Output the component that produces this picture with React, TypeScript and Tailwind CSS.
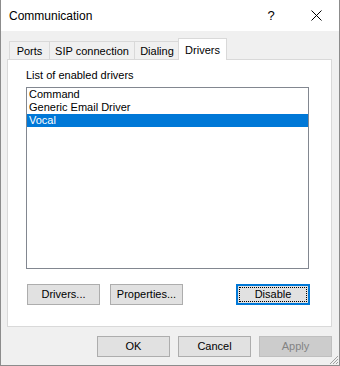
const tabs = [
  { label: "Ports", w: "w-[41px]" },
  { label: "SIP connection", w: "w-[85px]" },
  { label: "Dialing", w: "w-[45px]" },
  { label: "Drivers", w: "w-[49px]" },
];
const drivers = ["Command", "Generic Email Driver", "Vocal"];

const Btn = ({ label, w = "w-[73px]", disabled = false }: { label: string; w?: string; disabled?: boolean }) => (
  <div
    className={`${w} h-[21px] flex items-center justify-center border ${
      disabled ? "bg-[#cccccc] border-[#bfbfbf] text-[#838383]" : "bg-[#e1e1e1] border-[#adadad] text-black"
    }`}
  >
    {label}
  </div>
);

const App = () => {
  return (
    <div
      className="w-[340px] h-[366px] flex flex-col bg-[#f0f0f0] border-x border-b border-[#8c8c8c] text-[11px] text-black relative"
      style={{ fontFamily: '"Liberation Sans", Arial, sans-serif' }}
    >
      {/* title bar */}
      <div className="h-[31px] bg-white flex items-center pl-[8px] shrink-0">
        <span className="text-[12px]">Communication</span>
        <span className="ml-auto text-[13px] w-[10px] mr-[35px] text-center">?</span>
        <svg width="11" height="11" viewBox="0 0 11 11" className="mr-[17px]">
          <path d="M0.5 0.5 L10.5 10.5 M10.5 0.5 L0.5 10.5" stroke="#000" strokeWidth="1" />
        </svg>
      </div>

      {/* tab strip */}
      <div className="flex items-end h-[21px] mt-[7px] ml-[8px] relative z-10">
        {tabs.map((t, i) =>
          t.label === "Drivers" ? (
            <div
              key={t.label}
              className={`${t.w} h-[22px] -mb-px -ml-[2px] bg-white border border-b-0 border-[#d9d9d9] flex justify-center pt-[3px]`}
            >
              {t.label}
            </div>
          ) : (
            <div
              key={t.label}
              className={`${t.w} h-[18px] border-t border-r border-[#d9d9d9] ${i === 0 ? "border-l" : ""} flex items-center justify-center pt-px`}
            >
              {t.label}
            </div>
          )
        )}
      </div>

      {/* panel */}
      <div className="ml-[6px] w-[325px] h-[268px] bg-white border border-[#d9d9d9] pl-[18px] pt-[9px] flex flex-col">
        <div className="h-[13px] leading-[13px]">List of enabled drivers</div>
        <div className="mt-[5px] w-[283px] h-[182px] border border-[#828790] flex flex-col">
          {drivers.map((d) => (
            <div
              key={d}
              className={`h-[13px] leading-[13px] pl-[2px] ${d === "Vocal" ? "bg-[#0078d7] text-white" : ""}`}
            >
              {d}
            </div>
          ))}
        </div>
        <div className="flex mt-[15px] w-[284px]">
          <div className="ml-px flex gap-[10px]">
            <Btn label="Drivers..." />
            <Btn label="Properties..." />
          </div>
          <div className="ml-auto w-[74px] h-[21px] border-2 border-[#0078d7] bg-[#e1e1e1] p-px">
            <div className="w-full h-full border border-dotted border-black flex items-center justify-center">
              Disable
            </div>
          </div>
        </div>
      </div>

      {/* footer */}
      <div className="flex justify-end gap-[8px] mt-[9px] mr-[7px]">
        <Btn label="OK" />
        <Btn label="Cancel" />
        <Btn label="Apply" disabled />
      </div>

      {/* size grip */}
      <svg width="11" height="11" viewBox="0 0 11 11" className="absolute right-0 bottom-0">
        <path d="M10 2 L2 10 M10 5 L5 10 M10 8 L8 10" stroke="#a0a0a0" strokeWidth="1" />
      </svg>
    </div>
  );
};

export default App;
